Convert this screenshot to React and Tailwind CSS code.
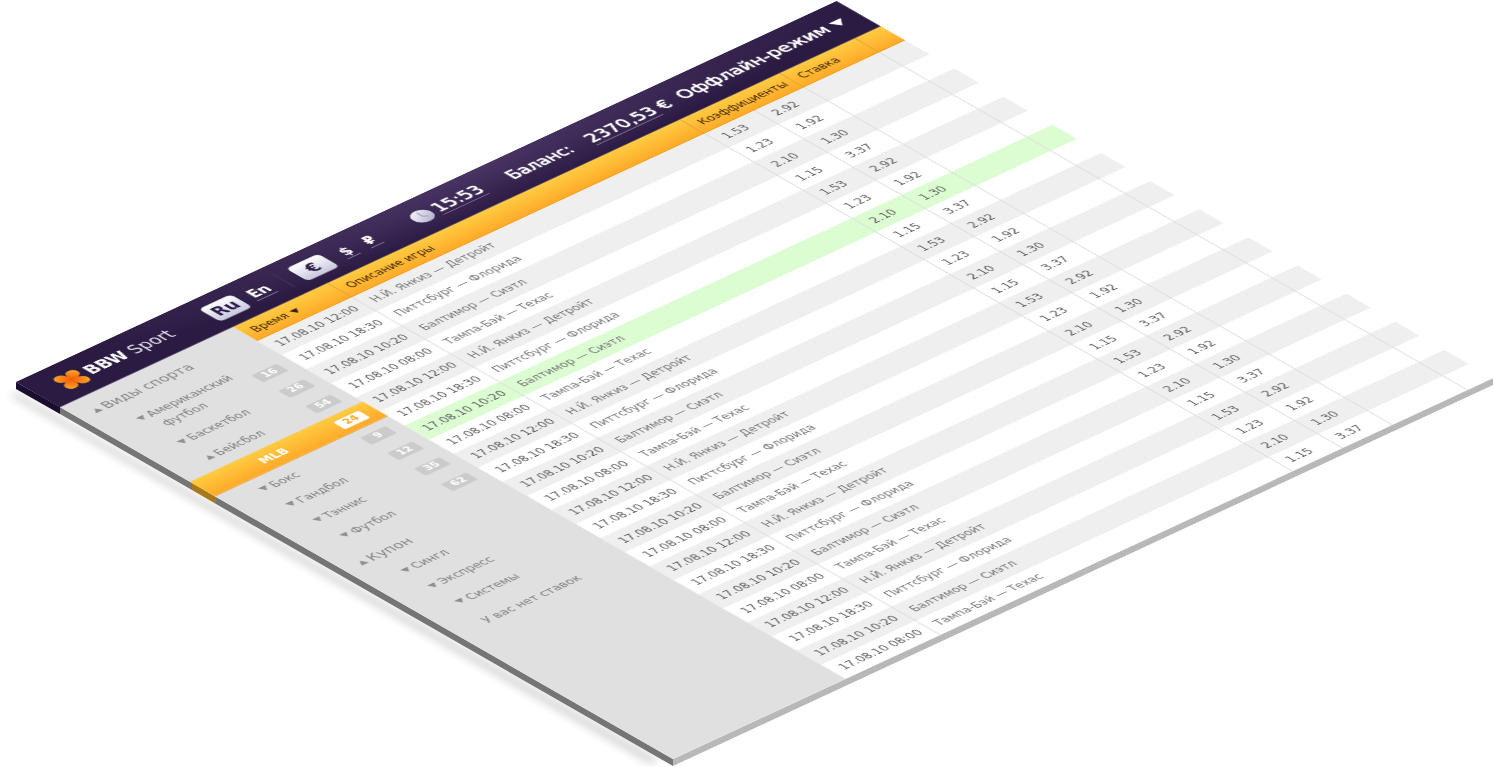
const DATES = ["17.08.10 12:00", "17.08.10 18:30", "17.08.10 10:20", "17.08.10 08:00"];
const GAMES = ["Н.Й. Янкиз — Детройт", "Питтсбург — Флорида", "Балтимор — Сиэтл", "Тампа-Бэй — Техас"];
const ODDS_A = ["1.53", "1.23", "2.10", "1.15"];
const ODDS_B = ["2.92", "1.92", "1.30", "3.37"];
const ROWS = Array.from({ length: 24 }, (_, i) => i);

function Tri({ up }) {
  return (
    <svg width="8" height="7" viewBox="0 0 8 7" className="shrink-0">
      <polygon points={up ? "4,0 8,7 0,7" : "0,0 8,0 4,7"} fill="#8f8f8f" />
    </svg>
  );
}

function Badge({ children, active }) {
  return (
    <span className={"ml-auto mr-[12px] flex h-[15px] w-[27px] shrink-0 items-center justify-center rounded-[2px] text-[11px] font-bold " + (active ? "bg-white text-[#f5a623]" : "bg-[#cbcbcb] text-white")}>
      {children}
    </span>
  );
}

function Item({ label, up, badge }) {
  return (
    <div className="flex h-[33px] items-center pl-[33px] text-[12.7px] text-[#808080]">
      <Tri up={up} />
      <span className="ml-[3px]">{label}</span>
      {badge && <Badge>{badge}</Badge>}
    </div>
  );
}

function Title({ label, className }) {
  return (
    <div className={"flex h-[33px] items-center pl-[15px] text-[15.4px] text-[#858585] " + className}>
      <Tri up />
      <span className="ml-[3px]">{label}</span>
    </div>
  );
}

function Logo() {
  const petal = "M12 12C9 12.5 2.5 12.5 1.5 7.5 0.8 3.6 3.6 0.8 7.5 1.5 12.5 2.5 12.5 9 12 12Z";
  return (
    <svg width="27" height="27" viewBox="0 0 24 24" className="shrink-0">
      <defs>
        <linearGradient id="lg" x1="0" y1="0" x2="1" y2="1">
          <stop offset="0" stopColor="#ffb030" />
          <stop offset="1" stopColor="#f25c05" />
        </linearGradient>
      </defs>
      <g fill="url(#lg)">
        <path d={petal} />
        <path d={petal} transform="rotate(90 12 12)" />
        <path d={petal} transform="rotate(180 12 12)" />
        <path d={petal} transform="rotate(270 12 12)" />
      </g>
    </svg>
  );
}

function Clock() {
  return (
    <svg width="20" height="20" viewBox="0 0 20 20" className="ml-[39px] shrink-0">
      <defs>
        <linearGradient id="cg" x1="0" y1="0" x2="0.7" y2="1">
          <stop offset="0" stopColor="#ffffff" />
          <stop offset="1" stopColor="#b4b1cf" />
        </linearGradient>
      </defs>
      <circle cx="10" cy="10" r="10" fill="url(#cg)" />
      <path d="M10 3V10L14 13" fill="none" stroke="#8d8aa8" strokeWidth="1" />
    </svg>
  );
}

function Chip({ children, className }) {
  return (
    <span className={"flex h-[27px] w-[34px] shrink-0 items-center justify-center rounded-[5px] bg-[linear-gradient(180deg,#ffffff,#c8c7de)] text-[18px] font-bold text-[#2b1b47] " + className}>
      {children}
    </span>
  );
}

function Under({ children, className }) {
  return <span className={"shrink-0 border-b border-[#8d80a5] text-center font-bold leading-[18px] " + className}>{children}</span>;
}

const GLOW = " [text-shadow:0_0_1px_#ffffff,0_0_1px_#ffffff]";

function Head() {
  return (
    <header className="flex h-[54px] items-center bg-[radial-gradient(ellipse_430px_60px_at_55%_0%,#4a3565,#2b1b43_95%)] pl-[22px] text-white">
      <Logo />
      <div className="ml-[3px] w-[130px] shrink-0 text-[18px] leading-none">
        <span className="font-bold">BBW</span> <span className="text-[#e9e6f0]">Sport</span>
      </div>
      <Chip>Ru</Chip>
      <Under className="ml-[9px] w-[22px] text-[16px]">En</Under>
      <span className="ml-[14px] h-[28px] w-px shrink-0 bg-[#46365f]" />
      <Chip className="ml-[13px]">€</Chip>
      <Under className="ml-[12px] w-[14px] text-[16px]">$</Under>
      <Under className="ml-[11px] w-[14px] text-[16px]">₽</Under>
      <Clock />
      <div className="ml-[4px] w-[77px] shrink-0">
        <span className={"border-b border-[#8d80a5] text-[19px] leading-[20px]" + GLOW}>15:53</span>
      </div>
      <div className={"w-[84px] shrink-0 text-[18px]" + GLOW}>Баланс:</div>
      <div className={"w-[98px] shrink-0 text-[19px]" + GLOW}>
        <span className="border-b border-[#8d80a5]">2370,53</span> €
      </div>
      <div className={"flex shrink-0 items-center text-[19.6px]" + GLOW}>
        Оффлайн-режим
        <svg width="13" height="10" viewBox="0 0 13 10" className="ml-[5px]">
          <polygon points="0,0 13,0 6.5,10" fill="#ffffff" />
        </svg>
      </div>
    </header>
  );
}

function Sidebar() {
  return (
    <aside className="w-[184px] shrink-0 bg-[#e0e0e0] pt-[7px]">
      <Title label="Виды спорта" />
      <div className="flex h-[51px] pl-[33px] text-[12.7px] leading-[19px] text-[#808080]">
        <div className="mt-[8px] flex items-start">
          <span className="mt-[6px] flex"><Tri /></span>
          <span className="ml-[3px] w-[96px]">Американский футбол</span>
        </div>
        <div className="ml-auto flex items-end pb-[9px]"><Badge>16</Badge></div>
      </div>
      <Item label="Баскетбол" badge="26" />
      <Item label="Бейсбол" up badge="54" />
      <div className="mt-[2px] flex h-[30px] items-center bg-[linear-gradient(180deg,#ffcb42,#ffa928)] pl-[62px] shadow-[0_1px_0_#f59c1a]">
        <span className="text-[13px] font-bold text-white">MLB</span>
        <Badge active>24</Badge>
      </div>
      <div className="mt-[2px]">
        <Item label="Бокс" badge="9" />
        <Item label="Гандбол" badge="12" />
        <Item label="Тэннис" badge="35" />
        <Item label="Футбол" badge="62" />
      </div>
      <Title label="Купон" className="mt-[9px]" />
      <Item label="Сингл" />
      <Item label="Экспресс" />
      <Item label="Системы" />
      <div className="mt-[4px] flex h-[33px] items-center pl-[30px] text-[13px] text-[#808080]">У вас нет ставок</div>
    </aside>
  );
}

const CELL = "border-r border-[#dcdcdc] pl-[8px]";
const GRID = "grid grid-cols-[101px_374.5px_53px_53px_80px_27.5px]";

function Table() {
  return (
    <main className="flex-1">
      <div className={GRID + " h-[30px] items-center bg-[linear-gradient(180deg,#ffcb42,#ffa928)] text-[12.4px] text-[#3f2a00] shadow-[inset_0_-1px_0_#f59c1a]"}>
        <div className="flex h-full items-center gap-[4px] border-r border-[#e8a030] pl-[8px]">
          Время
          <svg width="8" height="7" viewBox="0 0 8 7"><polygon points="0,0 8,0 4,7" fill="#2d1f00" /></svg>
        </div>
        <div className="flex h-full items-center border-r border-[#e8a030] pl-[8px]">Описание игры</div>
        <div className="col-span-2 flex h-full items-center border-r border-[#e8a030] pl-[8px]">Коэффициенты</div>
        <div className="flex h-full items-center border-r border-[#e8a030] pl-[8px]">Ставка</div>
        <div />
      </div>
      {ROWS.map((i) => (
        <div
          key={i}
          className={GRID + " h-[30px] text-[12.3px] leading-[30px] " + (i === 6 ? "bg-[#dcfdd2]" : i % 2 === 0 ? "bg-[#efefef]" : "bg-white")}
        >
          <div className={CELL + " text-[#5e5e5e]"}>{DATES[i % 4]}</div>
          <div className={CELL + " text-[#787878]"}>{GAMES[i % 4]}</div>
          <div className={CELL + " text-[#5e5e5e]"}>{ODDS_A[i % 4]}</div>
          <div className={CELL + " text-[#5e5e5e]"}>{ODDS_B[i % 4]}</div>
          <div className={CELL} />
          <div />
        </div>
      ))}
    </main>
  );
}

export default function App() {
  return (
    <div className="relative h-[767px] w-[1493px] overflow-hidden bg-white [font-family:'DejaVu_Sans_Condensed','DejaVu_Sans',sans-serif] [font-stretch:condensed]">
      <svg width="1493" height="767" className="absolute left-0 top-0">
        <defs>
          <filter id="sh" x="-20%" y="-20%" width="140%" height="140%">
            <feGaussianBlur stdDeviation="4" />
          </filter>
        </defs>
        <polygon points="16,392 660,760 650,764 10,396" fill="#000" opacity="0.16" filter="url(#sh)" />
        <polygon points="16,382 60,407 60,414 16,389" fill="#1a0e30" />
        <polygon points="60,407 192,483 192,490 60,414" fill="#757575" />
        <polygon points="192,483 216,497 216,504 192,490" fill="#a67a1c" />
        <polygon points="216,497 673,759 673,766 216,504" fill="#757575" />
        <polygon points="673,759 1493,378 1493,385 673,766" fill="#b8b8b8" />
      </svg>
      <div className="absolute left-0 top-0 flex w-[873px] origin-top-left flex-col blur-[0.45px] [transform:matrix(0.94,-0.4364,0.8168,0.4689,16,382)]">
        <Head />
        <div className="flex">
          <Sidebar />
          <Table />
        </div>
      </div>
    </div>
  );
}
